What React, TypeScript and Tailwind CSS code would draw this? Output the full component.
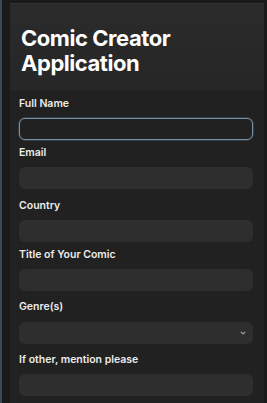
import React from "react";

const font = { fontFamily: "Inter, 'Noto Sans', 'Liberation Sans', sans-serif" };

function Label({ children, className = "" }: { children: React.ReactNode; className?: string }) {
  return (
    <div className={`text-[10.5px] leading-[14px] font-semibold text-[#ececec] ${className}`}>{children}</div>
  );
}

function Field({ className = "" }: { className?: string }) {
  return <div className={`h-[22px] rounded-[6px] bg-[#2e2e2e] ${className}`} />;
}

export default function App() {
  return (
    <div style={font} className="w-[267px] h-[403px] overflow-hidden bg-[#1a1a1a] flex">
      <div className="w-[2px] bg-[#3c4a57] shrink-0" />
      <div className="flex-1 flex flex-col pl-[8px] pr-[3px]">
        <div className="h-[4px] border-b border-[#333] shrink-0" />
        <div className="flex-1 flex flex-col bg-[#212121]">
          <div className="bg-gradient-to-b from-[#2b2b2b] to-[#262626] pt-[22px] pb-[15px] pl-[11px]">
            <h1 className="text-[22px] leading-[25px] font-bold text-white tracking-[-0.45px]">
              Comic Creator
              <br />
              Application
            </h1>
          </div>
          <div className="flex flex-col pl-[9px] pr-[11px] pt-[6px]">
            <Label>Full Name</Label>
            <div className="mt-[7px] h-[22px] rounded-[6px] bg-[#212121] border border-[#7390a6] shadow-[0_0_0_1px_rgba(115,144,166,0.25)]" />
            <Label className="mt-[6px]">Email</Label>
            <Field className="mt-[7px]" />
            <Label className="mt-[10px]">Country</Label>
            <Field className="mt-[7px]" />
            <Label className="mt-[6px]">Title of Your Comic</Label>
            <Field className="mt-[7px]" />
            <Label className="mt-[9px]">Genre(s)</Label>
            <div className="mt-[8px] h-[22px] rounded-[6px] bg-[#2e2e2e] flex items-center justify-end pr-[7px]">
              <svg width="6" height="4" viewBox="0 0 6 4" fill="none">
                <path d="M0.8 0.8L3 3L5.2 0.8" stroke="#a0a0a0" strokeWidth="1.2" />
              </svg>
            </div>
            <Label className="mt-[9px]">If other, mention please</Label>
            <Field className="mt-[7px]" />
          </div>
        </div>
      </div>
    </div>
  );
}
